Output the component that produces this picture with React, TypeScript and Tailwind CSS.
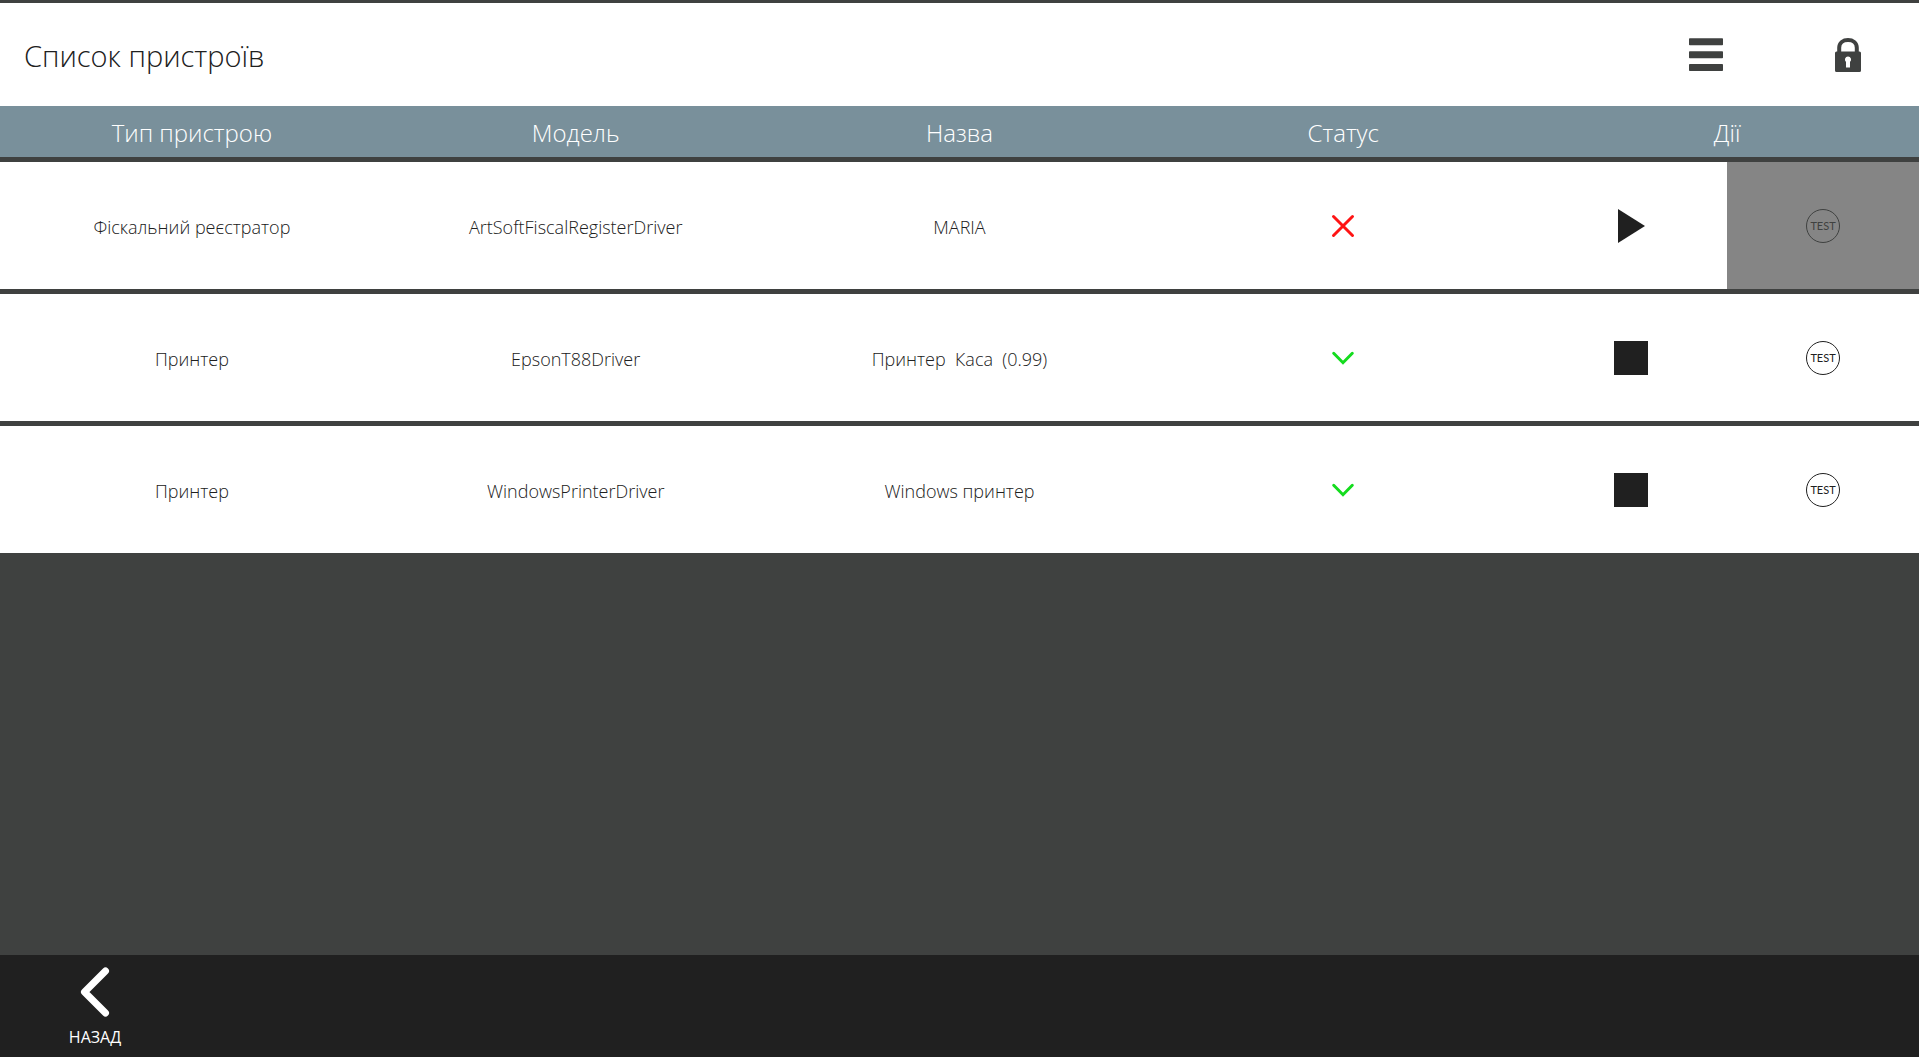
type Device = {
  id: number
  type: string
  model: string
  name: string
  isOnline: boolean
}

const devices: Device[] = [
  {
    id: 1,
    type: "Фіскальний реєстратор",
    model: "ArtSoftFiscalRegisterDriver",
    name: "MARIA",
    isOnline: false,
  },
  {
    id: 2,
    type: "Принтер",
    model: "EpsonT88Driver",
    name: "Принтер  Каса  (0.99)",
    isOnline: true,
  },
  {
    id: 3,
    type: "Принтер",
    model: "WindowsPrinterDriver",
    name: "Windows принтер",
    isOnline: true,
  },
]

const MenuIcon = () => (
  <svg className="w-[34px] h-[34px]" viewBox="0 0 34 34" fill="currentColor">
    <rect x="0" y="0.3" width="34" height="7" rx="0.8" />
    <rect x="0" y="13.2" width="34" height="7" rx="0.8" />
    <rect x="0" y="26" width="34" height="7" rx="0.8" />
  </svg>
)

const LockIcon = () => (
  <svg className="w-[26px] h-[34px]" viewBox="0 0 26 34">
    <path
      d="M4.200 16V9.800C4.200 4.600 8.200 2 13 2s8.800 2.600 8.800 7.800V16"
      fill="none"
      stroke="currentColor"
      strokeWidth="4"
    />
    <path
      d="M1.500 13.600h23a1.500 1.500 0 0 1 1.500 1.500V32.500a1.500 1.500 0 0 1-1.500 1.500h-23A1.500 1.500 0 0 1 0 32.500V15.100a1.500 1.500 0 0 1 1.500-1.500zM13 18.600a3 3 0 0 0-2 5.300V29.500h4V23.900a3 3 0 0 0-2-5.300z"
      fill="currentColor"
      fillRule="evenodd"
    />
  </svg>
)

const CrossIcon = () => (
  <svg
    className="w-6 h-6 mx-auto text-[#ff1414]"
    viewBox="0 0 24 24"
    fill="none"
    stroke="currentColor"
    strokeWidth="3"
    strokeLinecap="round"
  >
    <path d="M2.500 2.500l19 19M21.500 2.500l-19 19" />
  </svg>
)

const CheckIcon = () => (
  <svg
    className="w-6 h-6 mx-auto text-[#14dc1e]"
    viewBox="0 0 24 24"
    fill="none"
    stroke="currentColor"
    strokeWidth="3"
    strokeLinecap="round"
  >
    <path d="M2.700 7.300L12 16.700l9.300-9.400" />
  </svg>
)

const PlayIcon = () => (
  <svg className="w-[34px] h-[34px]" viewBox="0 0 34 34" fill="currentColor">
    <path d="M4 0l27 17L4 34z" />
  </svg>
)

const StopIcon = () => (
  <svg className="w-[34px] h-[34px]" viewBox="0 0 34 34" fill="currentColor">
    <rect width="34" height="34" />
  </svg>
)

const DeviceRow = ({ device }: { device: Device }) => {
  return (
    <tr className="h-[132px]">
      <td className="bg-white border-b-5 border-[#3f4140] pt-0.5">{device.type}</td>
      <td className="bg-white border-b-5 border-[#3f4140] pt-0.5">{device.model}</td>
      <td className="bg-white border-b-5 border-[#3f4140] pt-0.5 whitespace-pre">{device.name}</td>
      <td className="bg-white border-b-5 border-[#3f4140]">
        {device.isOnline ? <CheckIcon /> : <CrossIcon />}
      </td>
      <td className="bg-white border-b-5 border-[#3f4140] p-0">
        <button
          aria-label={device.isOnline ? "Зупинити" : "Запустити"}
          className="flex items-center justify-center w-full h-[127px]"
        >
          {device.isOnline ? <StopIcon /> : <PlayIcon />}
        </button>
      </td>
      <td className="bg-white border-b-5 border-[#3f4140] p-0">
        <button
          disabled={!device.isOnline}
          className="flex items-center justify-center w-full h-[127px] disabled:bg-[#858585] disabled:text-[#3f4140]"
        >
          <span className="flex items-center justify-center w-[34px] h-[34px] border border-current rounded-full font-['Lato',sans-serif] font-normal text-[11px] leading-none">
            TEST
          </span>
        </button>
      </td>
    </tr>
  )
}

const App = () => {
  return (
    <div className="flex flex-col min-h-screen bg-[#3f4140] border-t-3 border-[#3f4140] font-['Open_Sans',sans-serif] font-light text-[#202020]">
      <header className="flex items-center justify-between h-[103px] pl-6 bg-white">
        <h1 className="pt-0.5 text-[29px] leading-10">Список пристроїв</h1>
        <div className="flex text-[#3f4140]">
          <button aria-label="Меню" className="flex items-center justify-center w-[142px] h-[103px]">
            <MenuIcon />
          </button>
          <button aria-label="Заблокувати" className="flex items-center justify-center w-[142px] h-[103px]">
            <LockIcon />
          </button>
        </div>
      </header>

      <main className="grow">
        <table className="w-full table-fixed border-separate border-spacing-0 text-center text-[18px] leading-6">
          <colgroup>
            <col className="w-1/5" />
            <col className="w-1/5" />
            <col className="w-1/5" />
            <col className="w-1/5" />
            <col className="w-1/10" />
            <col className="w-1/10" />
          </colgroup>
          <thead>
            <tr className="h-14 text-[24px] leading-8 text-white [&>th]:pt-0.5 [&>th]:bg-[#79909b] [&>th]:border-b-5 [&>th]:border-[#3f4140] [&>th]:font-light">
              <th>Тип пристрою</th>
              <th>Модель</th>
              <th>Назва</th>
              <th>Статус</th>
              <th colSpan={2}>Дії</th>
            </tr>
          </thead>
          <tbody>
            {devices.map((device) => (
              <DeviceRow key={device.id} device={device} />
            ))}
          </tbody>
        </table>
      </main>

      <footer className="flex h-[102px] bg-[#202020] text-white">
        <button className="flex flex-col items-center w-[190px] pt-3 gap-2 font-normal text-[16px] leading-6">
          <svg
            className="w-[30px] h-[50px]"
            viewBox="0 0 30 50"
            fill="none"
            stroke="currentColor"
            strokeWidth="7"
            strokeLinecap="round"
            strokeLinejoin="round"
          >
            <path d="M25.500 4L4.500 25l21 21" />
          </svg>
          НАЗАД
        </button>
      </footer>
    </div>
  )
}

export default App
